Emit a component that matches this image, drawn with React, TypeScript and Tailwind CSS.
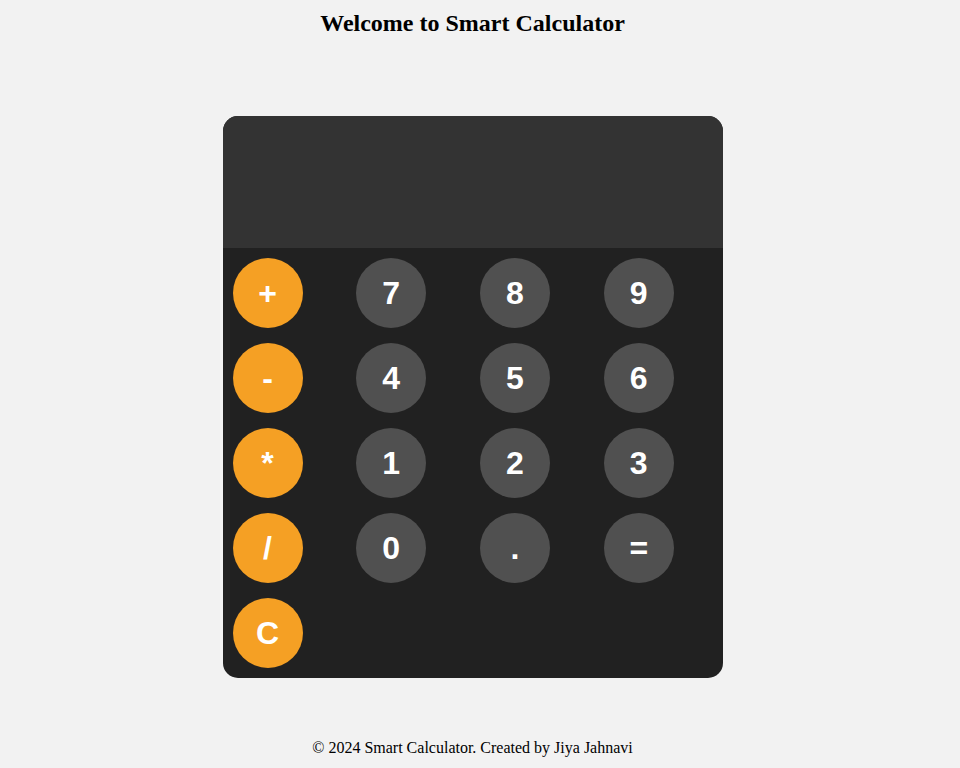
import React, { useState } from "react";

const keys: { label: string; op?: boolean }[] = [
  { label: "+", op: true },
  { label: "7" },
  { label: "8" },
  { label: "9" },
  { label: "-", op: true },
  { label: "4" },
  { label: "5" },
  { label: "6" },
  { label: "*", op: true },
  { label: "1" },
  { label: "2" },
  { label: "3" },
  { label: "/", op: true },
  { label: "0" },
  { label: "." },
  { label: "=" },
  { label: "C", op: true },
];

export default function App() {
  const [display, setDisplay] = useState("");

  const press = (k: string) => {
    if (k === "C") return setDisplay("");
    if (k === "=") {
      try {
        // eslint-disable-next-line no-new-func
        const v = Function(`return (${display})`)();
        setDisplay(String(v));
      } catch {
        setDisplay("Error");
      }
      return;
    }
    setDisplay((d) => d + k);
  };

  return (
    <div className="min-h-screen w-full bg-[#f2f2f2] pr-[15px] flex flex-col items-center font-['Liberation_Serif',serif] text-black">
      {/* Header */}
      <h2 className="pt-[9px] text-[24px] leading-[28px] font-bold">Welcome to Smart Calculator</h2>

      {/* Calculator */}
      <div className="mt-[79px] w-[500px] rounded-[15px] overflow-hidden bg-[#212121]">
        <div className="h-[132px] bg-[#333333] px-5 flex items-end justify-end pb-4 text-white text-[40px] font-['Liberation_Sans',sans-serif]">
          {display}
        </div>
        <div className="grid grid-cols-4 gap-[15px] p-[10px] justify-items-start">
          {keys.map((k) => (
            <button
              key={k.label}
              onClick={() => press(k.label)}
              className={`w-[70px] h-[70px] rounded-full flex items-center justify-center text-white text-[32px] font-bold font-['Liberation_Sans',sans-serif] ${
                k.op ? "bg-[#f5a024]" : "bg-[#505050]"
              }`}
            >
              {k.label}
            </button>
          ))}
        </div>
      </div>

      {/* Footer */}
      <footer className="mt-[61px] text-[16px] leading-[18px]">
        © 2024 Smart Calculator. Created by Jiya Jahnavi
      </footer>
    </div>
  );
}
